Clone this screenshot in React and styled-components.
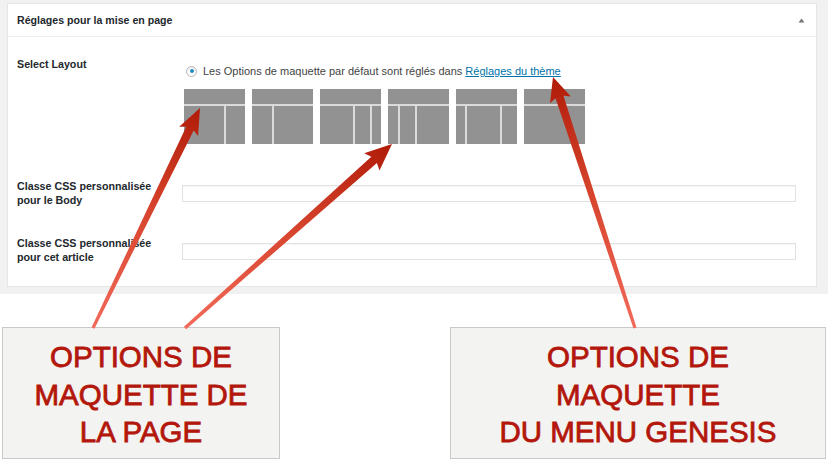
import styled, { createGlobalStyle } from "styled-components";

const GlobalStyle = createGlobalStyle`
  html, body {
    margin: 0;
    padding: 0;
    background: #ffffff;
  }
  body {
    font-family: "Liberation Sans", Arial, sans-serif;
    color: #23282d;
  }
`;

const Page = styled.div`
  position: relative;
  width: 828px;
  height: 463px;
  overflow: hidden;
`;

const AdminArea = styled.div`
  background: #f1f1f1;
  padding: 3px 11px 7px 7px;
`;

const Panel = styled.div`
  background: #ffffff;
  border: 1px solid #e5e5e5;
  box-sizing: border-box;
  height: 284px;
`;

const PanelHeader = styled.div`
  height: 32px;
  border-bottom: 1px solid #eeeeee;
  display: flex;
  align-items: center;
  justify-content: space-between;
  padding: 0 11px 0 9px;
  font-size: 10.6px;
  font-weight: bold;
  color: #23282d;
`;

const PanelBody = styled.div`
  padding: 20px 20px 0 9px;
  display: flex;
  flex-direction: column;
`;

const Row = styled.div`
  display: grid;
  grid-template-columns: 165px 1fr;
  margin-top: ${(p) => p.$top || 0}px;
`;

const Label = styled.div`
  font-size: 10.7px;
  font-weight: bold;
  line-height: 14px;
  color: #23282d;
`;

const Field = styled.div`
  display: flex;
  flex-direction: column;
  padding-top: ${(p) => p.$top || 0}px;
`;

const RadioLine = styled.div`
  display: flex;
  align-items: center;
  gap: 6px;
  margin-left: 4px;
  font-size: 11px;
  line-height: 14px;
  color: #444444;
`;

const Radio = styled.span`
  width: 9px;
  height: 9px;
  border-radius: 50%;
  border: 1px solid #b4b9be;
  box-shadow: inset 0 1px 2px rgba(0, 0, 0, 0.1);
  display: flex;
  align-items: center;
  justify-content: center;
  &::after {
    content: "";
    width: 4px;
    height: 4px;
    border-radius: 50%;
    background: #1e8cbe;
  }
`;

const ThemeLink = styled.a`
  color: #0073aa;
  text-decoration: underline;
`;

const Thumbs = styled.div`
  display: flex;
  gap: 7px;
  margin: 11px 0 0 2px;
`;

const Thumb = styled.div`
  width: 61px;
  height: 55px;
  display: flex;
  flex-direction: column;
  gap: 2px;
  background: #dadada;
`;

const ThumbHeader = styled.div`
  height: 15px;
  background: #929292;
`;

const ThumbCols = styled.div`
  flex: 1;
  display: flex;
  gap: 2px;
`;

const ThumbCol = styled.div`
  flex: ${(p) => p.$w} 1 0;
  background: #929292;
`;

const TextInput = styled.input`
  box-sizing: border-box;
  width: 614px;
  height: 17px;
  border: 1px solid #e2e2e2;
  box-shadow: inset 0 1px 1px rgba(0, 0, 0, 0.04);
  background: #ffffff;
  padding: 0 4px;
  outline: none;
`;

const Callouts = styled.div`
  display: flex;
  justify-content: space-between;
  padding: 33px 2px 0 2px;
`;

const Callout = styled.div`
  box-sizing: border-box;
  width: ${(p) => p.$w}px;
  height: 132px;
  background: #f3f3f2;
  border: 1px solid #c9c9c9;
  display: flex;
  align-items: center;
  justify-content: center;
  text-align: center;
  padding-top: 3px;
  font-size: 29.5px;
  line-height: 37.5px;
  color: #b3170b;
  -webkit-text-stroke: 0.8px #b3170b;
`;

const Overlay = styled.svg`
  position: absolute;
  left: 0;
  top: 0;
  pointer-events: none;
`;

const layouts = [[40, 19], [20, 39], [33, 15, 9], [10, 15, 32], [9, 33, 15], [61]];

const arrows = [
  { tail: [93, 328], tip: [200, 108], head: 23, half: 10.5 },
  { tail: [185, 328], tip: [392, 144], head: 24, half: 11.5 },
  { tail: [635, 328], tip: [553, 77], head: 21, half: 11 },
];

function arrowPoints({ tail, tip, head, half }) {
  const dx = tip[0] - tail[0];
  const dy = tip[1] - tail[1];
  const len = Math.hypot(dx, dy);
  const ux = dx / len;
  const uy = dy / len;
  const nx = -uy;
  const ny = ux;
  const bx = tip[0] - ux * head;
  const by = tip[1] - uy * head;
  const wt = 1.6;
  const wh = 4.2;
  const pts = [
    [tail[0] + nx * wt, tail[1] + ny * wt],
    [bx + nx * wh, by + ny * wh],
    [bx + nx * half - ux * 3, by + ny * half - uy * 3],
    tip,
    [bx - nx * half - ux * 3, by - ny * half - uy * 3],
    [bx - nx * wh, by - ny * wh],
    [tail[0] - nx * wt, tail[1] - ny * wt],
  ];
  return pts.map((p) => p.map((v) => v.toFixed(1)).join(",")).join(" ");
}

function CollapseIcon() {
  return (
    <svg width="7" height="5" viewBox="0 0 7 5">
      <path d="M0.5 4.5 L3.5 0.5 L6.5 4.5 Z" fill="#72777c" />
    </svg>
  );
}

export default function App() {
  return (
    <Page>
      <GlobalStyle />
      <AdminArea>
        <Panel>
          <PanelHeader>
            <span>Réglages pour la mise en page</span>
            <CollapseIcon />
          </PanelHeader>
          <PanelBody>
            <Row>
              <Label>Select Layout</Label>
              <Field $top={7}>
                <RadioLine>
                  <Radio />
                  <span>
                    Les Options de maquette par défaut sont réglés dans{" "}
                    <ThemeLink href="#">Réglages du thème</ThemeLink>
                  </span>
                </RadioLine>
                <Thumbs>
                  {layouts.map((cols, i) => (
                    <Thumb key={i}>
                      <ThumbHeader />
                      <ThumbCols>
                        {cols.map((w, j) => (
                          <ThumbCol key={j} $w={w} />
                        ))}
                      </ThumbCols>
                    </Thumb>
                  ))}
                </Thumbs>
              </Field>
            </Row>
            <Row $top={35}>
              <Label>
                Classe CSS personnalisée
                <br />
                pour le Body
              </Label>
              <Field $top={6}>
                <TextInput type="text" />
              </Field>
            </Row>
            <Row $top={29}>
              <Label>
                Classe CSS personnalisée
                <br />
                pour cet article
              </Label>
              <Field $top={7}>
                <TextInput type="text" />
              </Field>
            </Row>
          </PanelBody>
        </Panel>
      </AdminArea>
      <Callouts>
        <Callout $w={278}>
          OPTIONS DE
          <br />
          MAQUETTE DE
          <br />
          LA PAGE
        </Callout>
        <Callout $w={376}>
          OPTIONS DE
          <br />
          MAQUETTE
          <br />
          DU MENU GENESIS
        </Callout>
      </Callouts>
      <Overlay width="828" height="463" viewBox="0 0 828 463">
        <defs>
          {arrows.map((a, i) => (
            <linearGradient
              key={i}
              id={`arrowGrad${i}`}
              gradientUnits="userSpaceOnUse"
              x1={a.tail[0]}
              y1={a.tail[1]}
              x2={a.tip[0]}
              y2={a.tip[1]}
            >
              <stop offset="0" stopColor="#f26a5a" />
              <stop offset="0.55" stopColor="#d6432c" />
              <stop offset="1" stopColor="#b01c08" />
            </linearGradient>
          ))}
        </defs>
        {arrows.map((a, i) => (
          <polygon key={i} points={arrowPoints(a)} fill={`url(#arrowGrad${i})`} />
        ))}
      </Overlay>
    </Page>
  );
}
